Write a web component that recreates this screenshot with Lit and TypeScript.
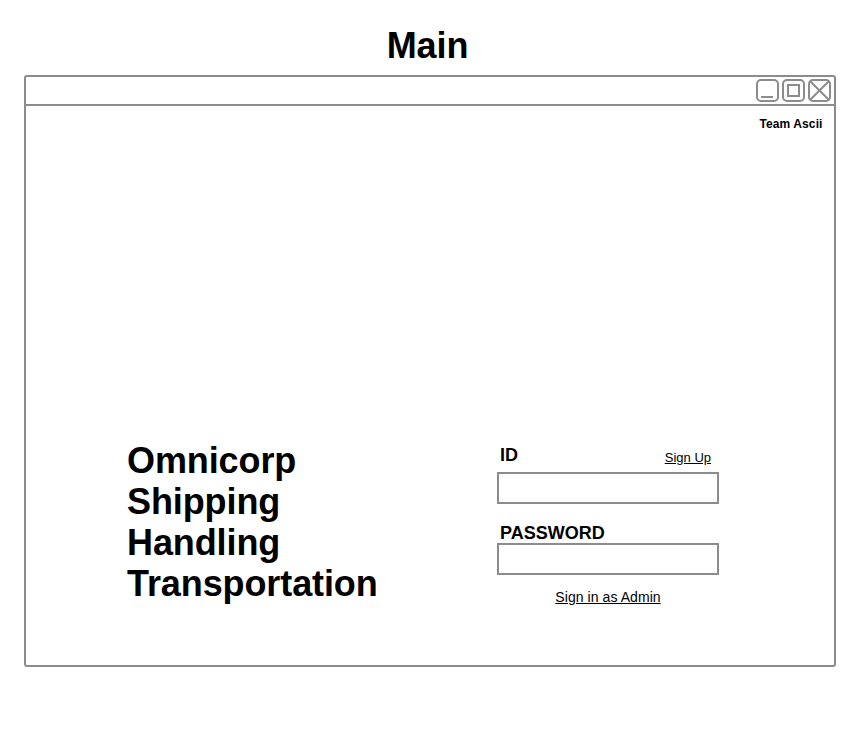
import { LitElement, html, css } from "lit";
import { customElement } from "lit/decorators.js";

@customElement("window-controls")
class WindowControls extends LitElement {
  static styles = css`
    :host { display: block; height: 24px; }
    svg { display: block; }
  `;
  render() {
    return html`<svg width="76" height="24" viewBox="0 0 76 24" fill="none" stroke="#8c8c8c" stroke-width="2">
      <rect x="1" y="1" width="21" height="21" rx="4" />
      <path d="M5 18H17" />
      <rect x="27" y="1" width="21" height="21" rx="4" />
      <rect x="32" y="6" width="11" height="11" />
      <rect x="53" y="1" width="21" height="21" rx="4" />
      <path d="M54 2L73 21M73 2L54 21" />
    </svg>`;
  }
}

@customElement("app-root")
class AppRoot extends LitElement {
  static styles = css`
    :host {
      display: block;
      box-sizing: border-box;
      height: 735px;
      padding: 25px 30px 0 24px;
      background: #fff;
      color: #000;
      font-family: "Liberation Sans", Arial, sans-serif;
      overflow: hidden;
    }
    h1 { margin: 0 5px 8px 0; text-align: center; font-size: 36px; line-height: 42px; letter-spacing: -0.1px; }
    .window {
      box-sizing: border-box;
      height: 592px;
      border: 2px solid #8c8c8c;
      border-radius: 3px;
      display: flex;
      flex-direction: column;
    }
    .bar {
      box-sizing: border-box;
      height: 29px;
      border-bottom: 2px solid #8c8c8c;
      display: flex;
      justify-content: flex-end;
      padding: 2px 2px 0 0;
    }
    .team { text-align: right; font-weight: bold; font-size: 12px; line-height: 14px; letter-spacing: 0.1px; padding: 11px 11.5px 0 0; }
    .content { display: flex; margin-top: 309px; padding-left: 101px; }
    .brand { width: 370px; font-weight: bold; font-size: 36px; line-height: 41px; letter-spacing: -0.1px; }
    .form { width: 222px; }
    .head { display: flex; justify-content: space-between; height: 32px; padding: 0 8px 0 3px; }
    .label { font-weight: bold; font-size: 18px; line-height: 21px; padding-top: 5px; }
    .signup { font-size: 13px; line-height: 15px; padding-top: 10px; text-decoration: underline; }
    .field { box-sizing: border-box; width: 222px; height: 32px; border: 2px solid #8c8c8c; }
    .second { padding: 19px 0 0 3px; height: 20px; }
    .admin { text-align: center; font-size: 14px; line-height: 16px; letter-spacing: 0.07px; padding-top: 14px; text-decoration: underline; }
  `;
  render() {
    return html`
      <h1>Main</h1>
      <div class="window">
        <div class="bar"><window-controls></window-controls></div>
        <div class="team">Team Ascii</div>
        <div class="content">
          <div class="brand">Omnicorp<br />Shipping<br />Handling<br />Transportation</div>
          <div class="form">
            <div class="head"><span class="label">ID</span><span class="signup">Sign Up</span></div>
            <div class="field"></div>
            <div class="label second">PASSWORD</div>
            <div class="field"></div>
            <div class="admin">Sign in as Admin</div>
          </div>
        </div>
      </div>
    `;
  }
}
